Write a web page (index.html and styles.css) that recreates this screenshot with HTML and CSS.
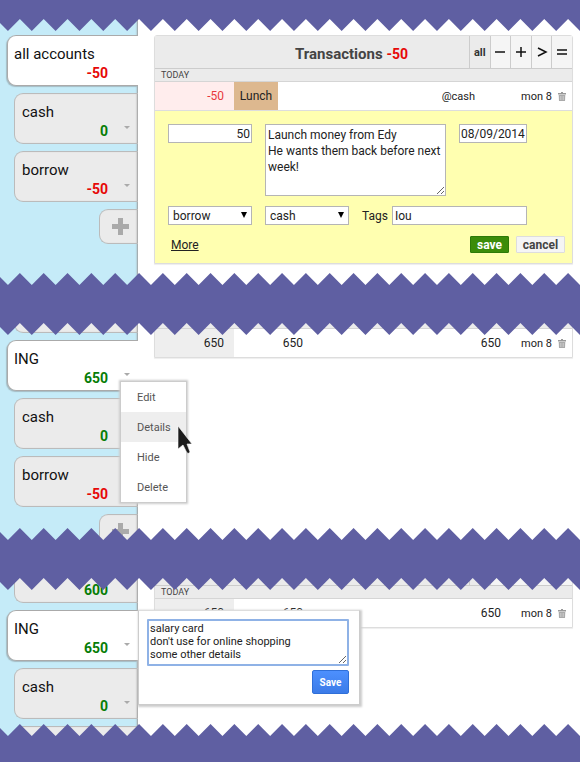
FILE: index.html
```html
<!DOCTYPE html>
<html lang="en">

<head>
    <meta charset="utf-8">
    <meta name="viewport" content="width=device-width, initial-scale=1">
    <title>Transactions</title>
    <link rel="stylesheet" href="styles.css">
</head>

<body>
    <svg class="defs" aria-hidden="true">
        <symbol id="teeth-down" viewBox="0 0 584 12" preserveAspectRatio="none">
            <path d="M-16 0V12l12-12 12 12 12-12 12 12 12-12 12 12 12-12 12 12 12-12 12 12 12-12 12 12 12-12 12 12 12-12 12 12 12-12 12 12 12-12 12 12 12-12 12 12 12-12 12 12 12-12 12 12 12-12 12 12 12-12 12 12 12-12 12 12 12-12 12 12 12-12 12 12 12-12 12 12 12-12 12 12 12-12 12 12 12-12 12 12 12-12 12 12 12-12 12 12 12-12 12 12 12-12 12 12V0z" />
        </symbol>
        <symbol id="teeth-up" viewBox="0 0 584 12" preserveAspectRatio="none">
            <path d="M-16 12l12-12 12 12 12-12 12 12 12-12 12 12 12-12 12 12 12-12 12 12 12-12 12 12 12-12 12 12 12-12 12 12 12-12 12 12 12-12 12 12 12-12 12 12 12-12 12 12 12-12 12 12 12-12 12 12 12-12 12 12 12-12 12 12 12-12 12 12 12-12 12 12 12-12 12 12 12-12 12 12 12-12 12 12 12-12 12 12 12-12 12 12 12-12 12 12 12-12 12 12 12-12 12 12z" />
        </symbol>
        <symbol id="trash" viewBox="0 0 8 9">
            <path d="M3 0h2v1h3v1.400H0V1h3z" fill="#999" />
            <path d="M.7 3h6.600L7 9H1z" fill="#aaa" />
            <path d="M2.500 4v4M4 4v4M5.500 4v4" stroke="#ddd" stroke-width=".5" />
        </symbol>
    </svg>

    <div class="band band-top"></div>

    <section class="shot">
        <svg class="teeth teeth-top"><use href="#teeth-down" /></svg>
        <div class="sheet">
            <aside class="accounts">
                <div class="tab active">
                    <div class="name">all accounts</div>
                    <div class="sum neg">-50</div>
                </div>
                <div class="tab">
                    <div class="name">cash</div>
                    <div class="sum pos">0</div>
                    <button class="caret" aria-label="cash menu"></button>
                </div>
                <div class="tab">
                    <div class="name">borrow</div>
                    <div class="sum neg">-50</div>
                    <button class="caret" aria-label="borrow menu"></button>
                </div>
                <button class="add" aria-label="Add account"></button>
            </aside>
            <main class="content">
                <div class="panel">
                    <header class="panel-head">
                        <h1>Transactions <span class="neg">-50</span></h1>
                        <div class="filters">
                            <button class="on">all</button>
                            <button aria-label="expenses"><svg viewBox="0 0 12 12"><path d="M1 6h10" /></svg></button>
                            <button aria-label="income"><svg viewBox="0 0 12 12"><path d="M1 6h10M6 1v10" /></svg></button>
                            <button aria-label="transfers"><svg viewBox="0 0 12 12"><path d="M2 2l8 4-8 4" /></svg></button>
                            <button aria-label="balance"><svg viewBox="0 0 12 12"><path d="M1 4h10M1 8h10" /></svg></button>
                        </div>
                    </header>
                    <div class="day">TODAY</div>
                    <table class="rows">
                        <tr>
                            <td class="amount minus">-50</td>
                            <td class="tag">Lunch</td>
                            <td class="account">@cash</td>
                            <td class="date">mon 8</td>
                            <td class="del"><svg class="trash"><use href="#trash" /></svg></td>
                        </tr>
                    </table>
                    <form class="edit">
                        <div class="line">
                            <input class="field value" type="text" value="50" aria-label="Amount">
                            <textarea class="field note" aria-label="Description">Launch money from Edy
He wants them back before next week!</textarea>
                            <input class="field when" type="text" value="08/09/2014" aria-label="Date">
                        </div>
                        <div class="line">
                            <div class="pick">
                                <select class="field" aria-label="From account">
                                    <option>borrow</option>
                                    <option>cash</option>
                                </select>
                            </div>
                            <div class="pick">
                                <select class="field" aria-label="To account">
                                    <option>cash</option>
                                    <option>borrow</option>
                                </select>
                            </div>
                            <div class="tags">
                                <label for="tags">Tags</label>
                                <input class="field" id="tags" type="text" value="Iou">
                            </div>
                        </div>
                        <div class="actions">
                            <a href="#more">More</a>
                            <button class="btn save" type="button">save</button>
                            <button class="btn cancel" type="button">cancel</button>
                        </div>
                    </form>
                </div>
            </main>
        </div>
        <svg class="teeth teeth-bottom"><use href="#teeth-up" /></svg>
    </section>

    <div class="band"></div>

    <section class="shot shot-menu">
        <svg class="teeth teeth-top"><use href="#teeth-down" /></svg>
        <div class="sheet">
            <aside class="accounts">
                <div class="tab"></div>
                <div class="tab active">
                    <div class="name">ING</div>
                    <div class="sum pos">650</div>
                    <button class="caret" aria-label="ING menu"></button>
                    <div class="menu">
                        <button>Edit</button>
                        <button class="hover">Details</button>
                        <button>Hide</button>
                        <button>Delete</button>
                        <svg class="cursor" viewBox="0 0 16 29">
                            <path d="M1 1v23l5-4 4 8q2 1 3-1l-3-8h5z" fill="#1c1c1c" stroke="#fff" stroke-width=".6" />
                        </svg>
                    </div>
                </div>
                <div class="tab">
                    <div class="name">cash</div>
                    <div class="sum pos">0</div>
                </div>
                <div class="tab">
                    <div class="name">borrow</div>
                    <div class="sum neg">-50</div>
                </div>
                <button class="add" aria-label="Add account"></button>
            </aside>
            <main class="content">
                <div class="panel">
                    <header class="panel-head"></header>
                    <div class="day"></div>
                    <table class="rows">
                        <tr>
                            <td class="amount">650</td>
                            <td class="total">650</td>
                            <td class="balance">650</td>
                            <td class="date">mon 8</td>
                            <td class="del"><svg class="trash"><use href="#trash" /></svg></td>
                        </tr>
                    </table>
                </div>
            </main>
        </div>
        <svg class="teeth teeth-bottom"><use href="#teeth-up" /></svg>
    </section>

    <div class="band"></div>

    <section class="shot shot-details">
        <svg class="teeth teeth-top"><use href="#teeth-down" /></svg>
        <div class="sheet">
            <aside class="accounts">
                <div class="tab">
                    <div class="name"></div>
                    <div class="sum pos">600</div>
                </div>
                <div class="tab active">
                    <div class="name">ING</div>
                    <div class="sum pos">650</div>
                    <button class="caret" aria-label="ING menu"></button>
                    <form class="details">
                        <textarea aria-label="Details" autofocus>salary card
don't use for online shopping
some other details</textarea>
                        <button type="button">Save</button>
                    </form>
                </div>
                <div class="tab">
                    <div class="name">cash</div>
                    <div class="sum pos">0</div>
                    <button class="caret" aria-label="cash menu"></button>
                </div>
                <div class="tab"></div>
            </aside>
            <main class="content">
                <div class="panel">
                    <header class="panel-head">
                        <h1></h1>
                        <div class="filters">
                            <button class="on" aria-label="all"></button>
                            <button aria-label="expenses"></button>
                            <button aria-label="income"></button>
                            <button aria-label="transfers"></button>
                            <button aria-label="balance"></button>
                        </div>
                    </header>
                    <div class="day">TODAY</div>
                    <table class="rows">
                        <tr>
                            <td class="amount">650</td>
                            <td class="total">650</td>
                            <td class="balance">650</td>
                            <td class="date">mon 8</td>
                            <td class="del"><svg class="trash"><use href="#trash" /></svg></td>
                        </tr>
                    </table>
                </div>
            </main>
        </div>
        <svg class="teeth teeth-bottom"><use href="#teeth-up" /></svg>
    </section>

    <div class="band band-bottom"></div>
</body>

</html>
```
FILE: styles.css
```css
* {
    box-sizing: border-box;
}

body {
    margin: 0;
    font-family: Roboto, "Liberation Sans", sans-serif;
    font-size: 12px;
    color: #222;
    background: #fff;
}

button,
input,
select,
textarea {
    font: inherit;
    color: inherit;
    margin: 0;
    padding: 0;
    border: 0;
    border-radius: 0;
}

.defs {
    display: block;
    width: 0;
    height: 0;
}

.pos {
    color: #077d07;
}

.neg {
    color: #e60808;
}

/* purple strips with the torn edge */
.band {
    height: 38px;
    background: #5f5fa2;
}

.band-top {
    height: 19px;
}

.band-bottom {
    height: 26px;
}

.teeth {
    position: absolute;
    left: 0;
    z-index: 10;
    width: 100%;
    height: 12px;
    fill: #5f5fa2;
}

.teeth-top {
    top: 0;
}

.teeth-bottom {
    bottom: 0;
}

.shot {
    position: relative;
    overflow: hidden;
}

.sheet {
    display: flex;
}

.shot-menu {
    height: 217px;
}

.shot-details {
    height: 158px;
}

.shot-menu .sheet {
    margin-top: -57px;
}

.shot-details .sheet {
    margin-top: -42px;
}

/* accounts */
.accounts {
    display: flex;
    flex: none;
    flex-direction: column;
    align-items: flex-end;
    gap: 7px;
    width: 138px;
    padding: 16px 0 29px;
    background: #c5ebf8;
    box-shadow: inset -2px 0 2px -1px #999;
}

.tab {
    position: relative;
    width: 124px;
    height: 51px;
    padding: 8px 30px 0 7px;
    border: 1px solid #bbb;
    border-right: 0;
    border-radius: 9px 0 0 9px;
    background: #ebebeb;
    box-shadow: inset -2px 0 2px -1px #999;
}

.tab.active {
    width: 131px;
    padding-left: 6px;
    border-color: #aaa;
    background: #fff;
    box-shadow: -1px 1px 1px #a5bcc4;
}

.name {
    height: 20px;
    font-size: 15px;
    line-height: 20px;
    color: #111;
}

.sum {
    font-size: 14px;
    line-height: 18px;
    font-weight: bold;
    text-align: right;
}

.caret {
    position: absolute;
    right: 8px;
    bottom: 14px;
    border: 3px solid transparent;
    border-top-color: #aaa;
    border-bottom: 0;
    background: none;
}

.add {
    position: relative;
    width: 39px;
    height: 35px;
    border: 1px solid #bbb;
    border-right: 0;
    border-radius: 9px 0 0 9px;
    background: #ebebeb;
    box-shadow: inset -2px 0 2px -1px #999;
}

.add::before,
.add::after {
    content: "";
    position: absolute;
    left: 12px;
    top: 14px;
    width: 17px;
    height: 5px;
    background: #aaa;
}

.add::after {
    transform: rotate(90deg);
}

/* transactions */
.content {
    flex: 1;
    min-width: 0;
    padding: 16px 7px 21px 16px;
}

.panel {
    border: 1px solid #ddd;
    border-radius: 3px 3px 0 0;
    box-shadow: 0 1px 1px #eee;
}

.panel-head {
    display: flex;
    height: 33px;
    border-bottom: 1px solid #ccc;
    background: #ebebeb;
}

.panel-head h1 {
    flex: 1;
    margin: 0;
    padding-left: 79px;
    font-size: 15px;
    line-height: 36px;
    font-weight: bold;
    text-align: center;
    color: #444;
}

.panel-head .neg {
    font-size: 14px;
}

.filters {
    display: grid;
    grid-template-columns: repeat(5, 1fr);
    width: 103px;
}

.filters button {
    display: flex;
    align-items: center;
    justify-content: center;
    border-left: 1px solid #ccc;
    background: #f5f5f5;
    font-size: 11px;
    font-weight: bold;
    color: #333;
}

.filters .on {
    background: #ebebeb;
}

.filters svg {
    width: 12px;
    height: 12px;
    fill: none;
    stroke: #111;
    stroke-width: 1.500;
}

.day {
    height: 13px;
    padding-left: 6px;
    border-bottom: 1px solid #d5d5d5;
    background: #ebebeb;
    font-size: 9px;
    line-height: 13px;
    color: #444;
}

.rows {
    width: 100%;
    table-layout: fixed;
    border-collapse: collapse;
    background: #fff;
}

.rows td {
    height: 28px;
    padding: 0;
    text-align: right;
}

.rows .amount {
    width: 79px;
    padding-right: 10px;
    background: #eee;
}

.rows .minus {
    background: #ffeded;
    color: #e8393c;
}

.rows .tag {
    width: 44px;
    background: #ddb88f;
    text-align: center;
}

.rows .total {
    width: 69px;
}

.rows .account {
    padding-right: 26px;
    font-size: 11px;
}

.rows .date {
    width: 51px;
    font-size: 11px;
}

.rows .del {
    width: 20px;
    padding-right: 6px;
}

.trash {
    display: inline-block;
    width: 8px;
    height: 9px;
    vertical-align: middle;
}

/* edit form */
.edit {
    padding: 13px 7px 10px 13px;
    border-top: 1px solid #ddd;
    background: #ffffb0;
}

.line {
    display: flex;
    align-items: flex-start;
    gap: 13px;
    margin: 0 38px 10px 0;
}

.field {
    height: 19px;
    padding: 0 2px;
    border: 1px solid #b5b5b5;
    background: #fff;
}

.value {
    width: 84px;
    padding-right: 1px;
    text-align: right;
}

.note {
    flex: 1;
    min-width: 0;
    height: 72px;
    padding-top: 2px;
    line-height: 16px;
}

.when {
    width: 68px;
    padding: 0 1px;
}

.pick {
    position: relative;
}

.pick .field {
    display: block;
    width: 84px;
    padding-left: 4px;
    appearance: none;
}

.pick::after {
    content: "";
    position: absolute;
    right: 5px;
    top: 6px;
    border: 3px solid transparent;
    border-top: 6px solid #000;
    border-bottom: 0;
    pointer-events: none;
}

.tags {
    display: flex;
    flex: 1;
    align-items: center;
    gap: 4px;
    min-width: 0;
}

.tags .field {
    flex: 1;
    min-width: 0;
}

.actions {
    display: flex;
    align-items: center;
    gap: 7px;
    padding-top: 1px;
}

.actions a {
    margin-right: auto;
    padding-left: 3px;
    color: #222;
}

.btn {
    height: 17px;
    border: 1px solid #ddd;
    border-radius: 1px;
    font-weight: bold;
}

.save {
    width: 39px;
    border-color: #2c7a08;
    background: #3b8c0a;
    color: #fff;
}

.cancel {
    width: 49px;
    background: #f5f5f5;
    color: #444;
}

/* account menu */
.menu {
    position: absolute;
    left: 112px;
    top: 40px;
    z-index: 5;
    width: 67px;
    border: 1px solid #ccc;
    background: #fff;
    box-shadow: 0 0 2px 1px #ccc;
}

.menu button {
    display: block;
    width: 100%;
    height: 30px;
    padding-left: 16px;
    background: #fff;
    font-size: 11px;
    text-align: left;
    color: #555;
}

.menu .hover {
    background: #eee;
}

.cursor {
    position: absolute;
    left: 56px;
    top: 43px;
    width: 16px;
    height: 29px;
}

/* account details */
.details {
    position: absolute;
    left: 130px;
    top: -1px;
    z-index: 5;
    display: flex;
    flex-direction: column;
    align-items: flex-end;
    gap: 4px;
    width: 222px;
    height: 95px;
    padding: 8px 10px 0 8px;
    border: 1px solid #ccc;
    border-top-color: #ddd;
    background: #fff;
    box-shadow: 1px 1px 2px 1px #ccc;
}

.details textarea {
    width: 100%;
    height: 47px;
    padding: 1px;
    border: 2px solid #8fb2e6;
    border-radius: 1px;
    outline: 0;
    font-size: 11px;
    line-height: 13px;
}

.details button {
    width: 37px;
    height: 24px;
    border: 1px solid #2f6fd8;
    border-radius: 2px;
    background: linear-gradient(#4d90fe, #3b7be8);
    font-size: 10px;
    font-weight: bold;
    color: #fff;
}
```
